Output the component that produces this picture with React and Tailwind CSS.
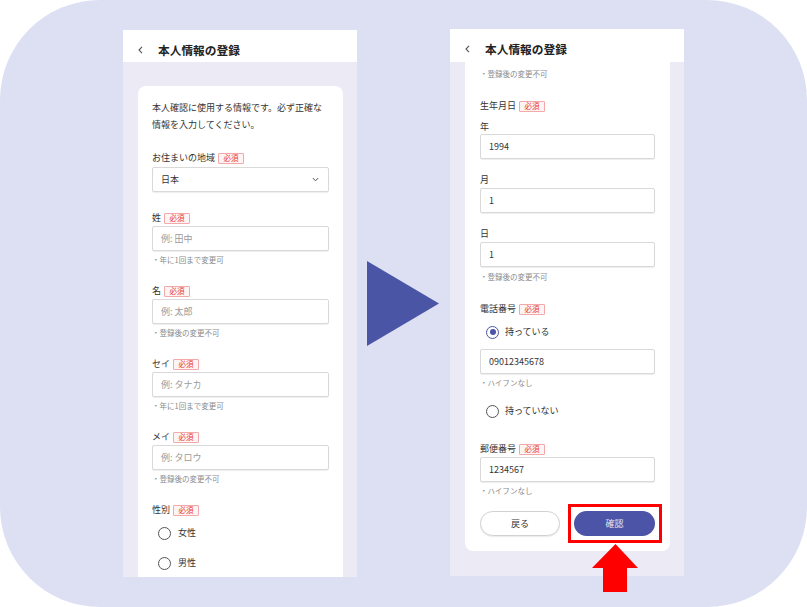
import React from "react";

const FONT = { fontFamily: '"Noto Sans CJK JP", "Noto Sans", sans-serif' };

function Badge() {
  return (
    <span className="inline-flex h-[11px] w-[26px] items-center justify-center rounded-[1px] border border-[#f3a9a9] bg-[#fff4f4] text-[7.5px] leading-none text-[#e53935]">
      必須
    </span>
  );
}

function Label({ children, badge = true }) {
  return (
    <div className="flex h-[12px] items-center gap-[3px] text-[9px] leading-[12px] text-[#333]">
      <span>{children}</span>
      {badge && <Badge />}
    </div>
  );
}

function Input({ children, placeholder, className = "" }) {
  return (
    <div
      className={
        "flex h-[25px] items-center rounded-[2px] border border-[#d9d9d9] bg-white px-[8px] text-[9px] leading-none shadow-[0_1px_1px_rgba(0,0,0,0.07)] " +
        (placeholder ? "text-[#9a9a9a] " : "text-[#333] ") +
        className
      }
    >
      {children}
    </div>
  );
}

function Helper({ children, className = "" }) {
  return (
    <div className={"text-[7.5px] leading-[10px] text-[#8a8a8a] " + className}>
      {children}
    </div>
  );
}

function Radio({ children, checked, className = "" }) {
  return (
    <div className={"flex h-[20px] items-center gap-[6px] pl-[6px] text-[9px] text-[#333] " + className}>
      {checked ? (
        <span className="flex h-[13px] w-[13px] items-center justify-center rounded-full border-[1.5px] border-[#4b54a6]">
          <span className="h-[6px] w-[6px] rounded-full bg-[#4b54a6]" />
        </span>
      ) : (
        <span className="h-[13px] w-[13px] rounded-full border-[1.5px] border-[#555]" />
      )}
      <span>{children}</span>
    </div>
  );
}

function Header({ className = "" }) {
  return (
    <div className={"flex shrink-0 items-center bg-white pl-[15px] " + className}>
      <svg width="5" height="8" viewBox="0 0 5 8" className="mr-[15px]">
        <polyline points="4,0.8 1,4 4,7.2" fill="none" stroke="#555" strokeWidth="1.1" />
      </svg>
      <span className="text-[11.7px] font-bold leading-none text-[#222]">本人情報の登録</span>
    </div>
  );
}

function LeftPhone() {
  return (
    <div className="mt-[1px] flex h-[547px] w-[234px] shrink-0 flex-col overflow-hidden">
      <Header className="h-[32px] pt-[7px]" />
      <div className="flex-1 overflow-hidden bg-[#ecebf5] px-[15px] pt-[24px]">
        <div className="h-[600px] w-[205px] rounded-[8px] bg-white px-[14px] pt-[13px]">
          <p className="text-[9px] leading-[17px] text-[#333]">
            本人確認に使用する情報です。必ず正確な
            <br />
            情報を入力してください。
          </p>
          <div className="mt-[19px]">
            <Label>お住まいの地域</Label>
            <div className="mt-[3px] flex h-[25px] items-center justify-between rounded-[2px] border border-[#d9d9d9] bg-white pl-[8px] pr-[9px] text-[9px] text-[#333] shadow-[0_1px_1px_rgba(0,0,0,0.07)]">
              <span>日本</span>
              <svg width="7" height="5" viewBox="0 0 7 5">
                <polyline points="0.8,1 3.5,3.8 6.2,1" fill="none" stroke="#555" strokeWidth="1" />
              </svg>
            </div>
          </div>
          <div className="mt-[20px]">
            <Label>姓</Label>
            <Input placeholder className="mt-[2px]">例: 田中</Input>
            <Helper className="mt-[4px]">・年に1回まで変更可</Helper>
          </div>
          <div className="mt-[20px]">
            <Label>名</Label>
            <Input placeholder className="mt-[2px]">例: 太郎</Input>
            <Helper className="mt-[4px]">・登録後の変更不可</Helper>
          </div>
          <div className="mt-[20px]">
            <Label>セイ</Label>
            <Input placeholder className="mt-[2px]">例: タナカ</Input>
            <Helper className="mt-[4px]">・年に1回まで変更可</Helper>
          </div>
          <div className="mt-[20px]">
            <Label>メイ</Label>
            <Input placeholder className="mt-[2px]">例: タロウ</Input>
            <Helper className="mt-[4px]">・登録後の変更不可</Helper>
          </div>
          <div className="mt-[20px]">
            <Label>性別</Label>
            <Radio className="mt-[7px] gap-[7px]">女性</Radio>
            <Radio className="mt-[10px] gap-[7px]">男性</Radio>
          </div>
        </div>
      </div>
    </div>
  );
}

function RightPhone() {
  return (
    <div className="flex h-[547px] w-[234px] shrink-0 flex-col">
      <Header className="h-[33px] pt-[6px]" />
      <div className="flex-1 bg-[#ecebf5] px-[15px]">
        <div className="w-[205px] rounded-b-[8px] bg-white px-[15px] pb-[15px] pt-[7px]">
          <Helper>・登録後の変更不可</Helper>
          <div className="mt-[21px]">
            <Label>生年月日</Label>
            <div className="mt-[9px] text-[9px] leading-[12px] text-[#333]">年</div>
            <Input className="mt-[1px]">1994</Input>
            <div className="mt-[15px] text-[9px] leading-[12px] text-[#333]">月</div>
            <Input className="mt-[2px]">1</Input>
            <div className="mt-[15px] text-[9px] leading-[12px] text-[#333]">日</div>
            <Input className="mt-[2px]">1</Input>
            <Helper className="mt-[5px]">・登録後の変更不可</Helper>
          </div>
          <div className="mt-[21px]">
            <Label>電話番号</Label>
            <Radio checked className="mt-[7px]">持っている</Radio>
            <Input className="mt-[7px]">09012345678</Input>
            <Helper className="mt-[4px]">・ハイフンなし</Helper>
            <Radio className="mt-[13px]">持っていない</Radio>
          </div>
          <div className="mt-[22px]">
            <Label>郵便番号</Label>
            <Input className="mt-[2px]">1234567</Input>
            <Helper className="mt-[4px]">・ハイフンなし</Helper>
          </div>
          <div className="mt-[15px] flex items-center gap-[14px]">
            <button className="flex h-[25px] w-[80px] items-center justify-center rounded-full border border-[#d2d2d2] bg-white text-[9px] text-[#333] shadow-[0_1px_1px_rgba(0,0,0,0.08)]">
              戻る
            </button>
            <div className="relative">
              <button className="flex h-[25px] w-[81px] items-center justify-center rounded-full bg-[#4b54a6] text-[9px] text-[#e6e7f4]">
                確認
              </button>
              <div className="absolute left-[-6px] top-[-7px] h-[39px] w-[94px] border-[3px] border-[#ff0000]" />
            </div>
          </div>
        </div>
      </div>
    </div>
  );
}

export default function App() {
  return (
    <div className="h-[607px] w-[807px] bg-white" style={FONT}>
      <div className="relative flex h-full w-full items-start rounded-[100px] bg-[#dde0f3] pl-[123px] pt-[29px]">
        <LeftPhone />
        <svg width="72" height="85" viewBox="0 0 72 85" className="ml-[10px] mt-[232px] shrink-0">
          <polygon points="0,0 72,42.5 0,85" fill="#4a55a6" />
        </svg>
        <div className="ml-[11px]">
          <RightPhone />
        </div>
        <svg width="47" height="48" viewBox="0 0 47 48" className="absolute left-[592px] top-[544px]">
          <polygon points="23.5,0 46,24 35,24 35,48 11,48 11,24 0,24" fill="#ff0000" />
        </svg>
      </div>
    </div>
  );
}
